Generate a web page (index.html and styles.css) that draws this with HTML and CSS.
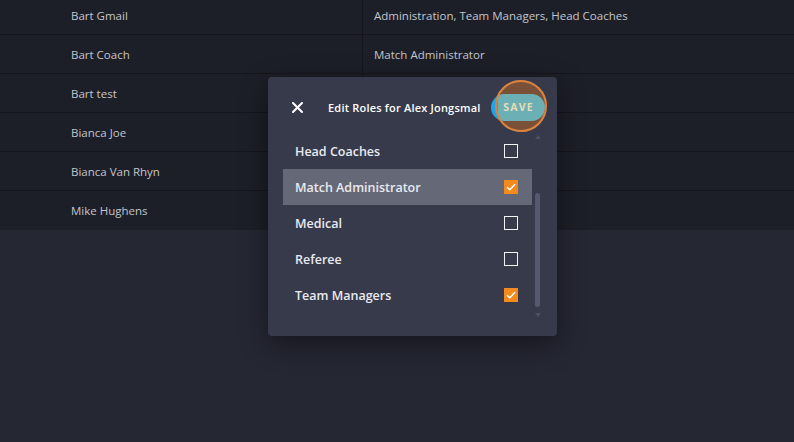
FILE: index.html
```html
<!DOCTYPE html>
<html lang="en">
<head>
<meta charset="UTF-8">
<meta name="viewport" content="width=device-width, initial-scale=1.0">
<title>Users - Roles</title>
<link rel="stylesheet" href="styles.css">
</head>
<body>

<div class="users-table">
    <div class="row"><div class="cell name">Bart Gmail</div><div class="cell roles">Administration, Team Managers, Head Coaches</div></div>
    <div class="row"><div class="cell name">Bart Coach</div><div class="cell roles">Match Administrator</div></div>
    <div class="row"><div class="cell name">Bart test</div><div class="cell roles"></div></div>
    <div class="row"><div class="cell name">Bianca Joe</div><div class="cell roles">Match Administrator</div></div>
    <div class="row"><div class="cell name">Bianca Van Rhyn</div><div class="cell roles">Assistant Coaches</div></div>
    <div class="row"><div class="cell name">Mike Hughens</div><div class="cell roles"></div></div>
</div>

<!-- Modal de edicao de papeis -->
<div class="modal">
    <div class="modal-header">
        <span class="close-btn">
            <svg width="11" height="11" viewBox="0 0 11 11"><path d="M1 1 L10 10 M10 1 L1 10" stroke="#fff" stroke-width="2" stroke-linecap="round"/></svg>
        </span>
        <span class="modal-title">Edit Roles for Alex Jongsmal</span>
        <div class="save-wrap">
            <span class="click-fill"></span>
            <button class="save-btn">SAVE</button>
            <span class="click-ring"></span>
        </div>
    </div>
    <div class="modal-body">
        <ul class="role-list">
            <li class="role"><span>Head Coaches</span><span class="check"></span></li>
            <li class="role active"><span>Match Administrator</span><span class="check checked"><svg width="10" height="8" viewBox="0 0 10 8"><path d="M1 4.2 L3.8 6.8 L9 1.2" fill="none" stroke="#fff" stroke-width="1.5"/></svg></span></li>
            <li class="role"><span>Medical</span><span class="check"></span></li>
            <li class="role"><span>Referee</span><span class="check"></span></li>
            <li class="role"><span>Team Managers</span><span class="check checked"><svg width="10" height="8" viewBox="0 0 10 8"><path d="M1 4.2 L3.8 6.8 L9 1.2" fill="none" stroke="#fff" stroke-width="1.5"/></svg></span></li>
        </ul>
        <div class="scrollbar">
            <span class="arrow up"></span>
            <span class="track"><span class="thumb"></span></span>
            <span class="arrow down"></span>
        </div>
    </div>
</div>

</body>
</html>
```

FILE: styles.css
```css
body {
    margin: 0;
    padding: 0;
    background-color: #252733;
    font-family: "Open Sans", "Noto Sans", sans-serif;
    height: 442px;
    overflow: hidden;
    position: relative;
}

/* Tabela de usuarios */
.users-table {
    margin-top: -4px;
    background-color: #1d1f28;
}

.row {
    display: flex;
    height: 38px;
    border-bottom: 1px solid #15161c;
}

.row:last-child {
    border-bottom: none;
    height: 39px;
}

.cell {
    display: flex;
    align-items: center;
    font-size: 11.5px;
    color: #c3c5cb;
}

.name {
    width: 291px;
    padding-left: 71px;
    border-right: 1px solid #15161c;
}

.roles {
    padding-left: 11px;
}

/* Modal */
.modal {
    position: absolute;
    left: 268px;
    top: 77px;
    width: 289px;
    height: 259px;
    background-color: #373a4a;
    border-radius: 4px;
    box-shadow: 0 8px 28px rgba(0, 0, 0, 0.45);
}

.modal-header {
    display: flex;
    align-items: center;
    box-sizing: border-box;
    height: 56px;
    padding: 4px 12px 0 24px;
}

.close-btn {
    display: flex;
    width: 11px;
    margin-right: 25px;
}

.modal-title {
    flex: 1;
    font-size: 11px;
    font-weight: 600;
    letter-spacing: 0.2px;
    color: #fff;
}

/* Botao salvar com marcador de clique */
.save-wrap {
    position: relative;
    display: flex;
}

.save-btn {
    position: relative;
    z-index: 1;
    width: 54px;
    height: 27px;
    border: none;
    border-radius: 14px;
    background: linear-gradient(to right, #1da4ea 0, #1da4ea 7px, #6cb0b5 7px);
    color: #e6dcb4;
    font-family: inherit;
    font-size: 10.5px;
    font-weight: 700;
    letter-spacing: 1.2px;
    padding: 0 0 0 1px;
}

.click-fill,
.click-ring {
    position: absolute;
    left: 4px;
    top: -14px;
    width: 48px;
    height: 48px;
    border-radius: 50%;
    border: 2px solid transparent;
}

.click-fill {
    z-index: 0;
    background-color: #7a5038;
}

.click-ring {
    z-index: 2;
    border-color: #d9843f;
}

.modal-body {
    display: flex;
    padding-left: 15px;
}

.role-list {
    list-style: none;
    margin: 0;
    padding: 0;
    width: 249px;
}

.role {
    display: flex;
    align-items: center;
    justify-content: space-between;
    height: 36px;
    padding: 0 14px 0 12px;
    font-size: 12.5px;
    font-weight: 600;
    color: #e9eaf0;
}

.role.active {
    background-color: #656877;
}

.check {
    width: 12px;
    height: 12px;
    border: 1.5px solid #f2f2f2;
    display: flex;
    align-items: center;
    justify-content: center;
}

.check.checked {
    background-color: #f28a1e;
    border-color: #f28a1e;
}

/* Barra de rolagem */
.scrollbar {
    display: flex;
    flex-direction: column;
    align-items: center;
    width: 9px;
    margin-left: 1px;
    padding-top: 2px;
    height: 182px;
}

.arrow {
    width: 0;
    height: 0;
    border-left: 3.5px solid transparent;
    border-right: 3.5px solid transparent;
}

.arrow.up {
    border-bottom: 4px solid #4d5164;
}

.arrow.down {
    border-top: 4px solid #4d5164;
}

.track {
    flex: 1;
    display: flex;
    flex-direction: column;
    justify-content: flex-end;
    padding: 4px 0 6px;
}

.thumb {
    width: 5px;
    height: 114px;
    border-radius: 3px;
    background-color: #545870;
}
```
